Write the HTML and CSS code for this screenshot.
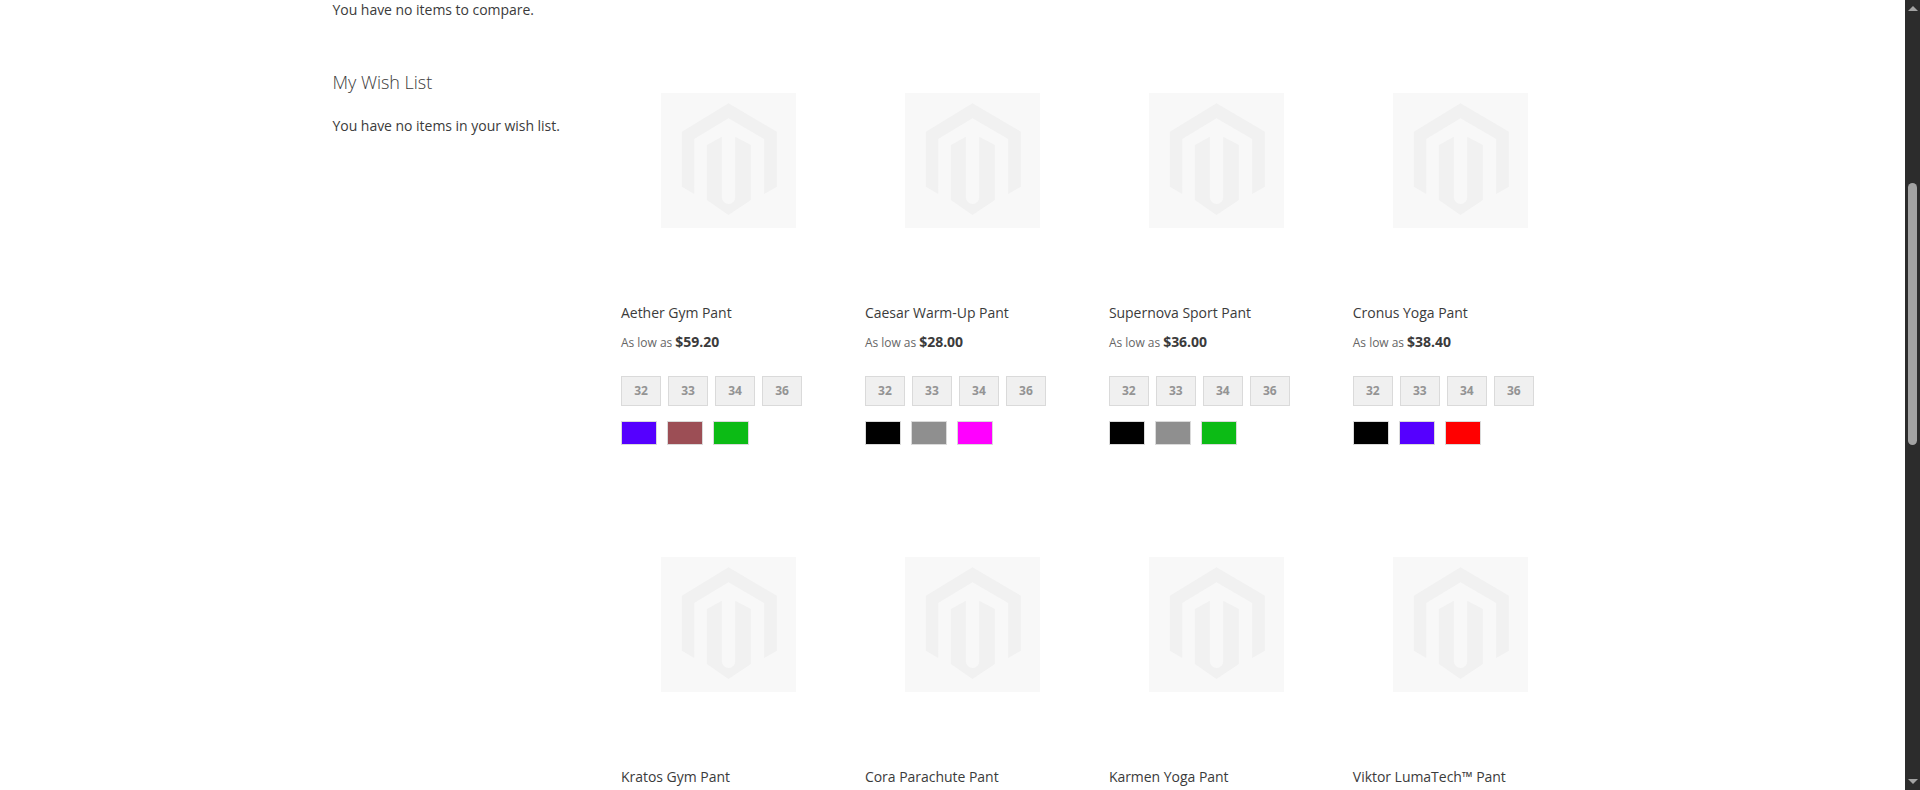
FILE: index.html
```html
<!DOCTYPE html>
<html lang="en">
<head>
    <meta charset="UTF-8">
    <title>Pants</title>
    <link rel="stylesheet" href="styles.css">
</head>
<body>
<svg class="defs" width="0" height="0" aria-hidden="true">
    <symbol id="placeholder" viewBox="0 0 135 135">
        <path fill="#f1f1f1" d="M67.5 10.3 115.9 38.7V93.7L103.2 101V46L67.5 25.3 33.2 46V101L20.9 93.7V38.7Z"/>
        <path fill="#f1f1f1" d="M45.9 52 60.9 43.7V104.4a6.65 6.65 0 0 0 13.3 0V43.7L89.9 52V107L67.5 122 45.9 107Z"/>
    </symbol>
</svg>
<div class="page">
    <main class="main">
        <aside class="sidebar">
            <p class="compare">You have no items to compare.</p>
            <h2 class="wish-title">My Wish List</h2>
            <p class="wish-empty">You have no items in your wish list.</p>
        </aside>
        <div class="products">
            <div class="product">
                <div class="photo"><svg><use href="#placeholder"/></svg></div>
                <a class="name">Aether Gym Pant</a>
                <div class="price">As low as <b>$59.20</b></div>
                <div class="sizes"><span>32</span><span>33</span><span>34</span><span>36</span></div>
                <div class="colors"><i class="purple"></i><i class="brown"></i><i class="green"></i></div>
            </div>
            <div class="product">
                <div class="photo"><svg><use href="#placeholder"/></svg></div>
                <a class="name">Caesar Warm-Up Pant</a>
                <div class="price">As low as <b>$28.00</b></div>
                <div class="sizes"><span>32</span><span>33</span><span>34</span><span>36</span></div>
                <div class="colors"><i class="black"></i><i class="gray"></i><i class="pink"></i></div>
            </div>
            <div class="product">
                <div class="photo"><svg><use href="#placeholder"/></svg></div>
                <a class="name">Supernova Sport Pant</a>
                <div class="price">As low as <b>$36.00</b></div>
                <div class="sizes"><span>32</span><span>33</span><span>34</span><span>36</span></div>
                <div class="colors"><i class="black"></i><i class="gray"></i><i class="green"></i></div>
            </div>
            <div class="product">
                <div class="photo"><svg><use href="#placeholder"/></svg></div>
                <a class="name">Cronus Yoga Pant</a>
                <div class="price">As low as <b>$38.40</b></div>
                <div class="sizes"><span>32</span><span>33</span><span>34</span><span>36</span></div>
                <div class="colors"><i class="black"></i><i class="purple"></i><i class="red"></i></div>
            </div>
            <div class="product">
                <div class="photo"><svg><use href="#placeholder"/></svg></div>
                <a class="name">Kratos Gym Pant</a>
            </div>
            <div class="product">
                <div class="photo"><svg><use href="#placeholder"/></svg></div>
                <a class="name">Cora Parachute Pant</a>
            </div>
            <div class="product">
                <div class="photo"><svg><use href="#placeholder"/></svg></div>
                <a class="name">Karmen Yoga Pant</a>
            </div>
            <div class="product">
                <div class="photo"><svg><use href="#placeholder"/></svg></div>
                <a class="name">Viktor LumaTech™ Pant</a>
            </div>
        </div>
    </main>
    <div class="scrollbar">
        <div class="arrow-up"></div>
        <div class="thumb"></div>
        <div class="arrow-down"></div>
    </div>
</div>
</body>
</html>
```

FILE: styles.css
```css
html, body {
  margin: 0;
  height: 790px;
  overflow: hidden;
  background: #fff;
}
body {
  font-family: "Open Sans", "Liberation Sans", sans-serif;
  font-size: 14px;
  letter-spacing: -0.03px;
  color: #3b3b3b;
}
.defs { position: absolute; }

.page {
  display: flex;
  height: 790px;
  overflow: hidden;
}
.main {
  flex: 1;
  display: flex;
  padding-left: 332.5px;
  align-items: flex-start;
}

.sidebar { width: 288.5px; }
.sidebar p { margin: 0; }
.compare { line-height: 20px; }
.wish-title {
  margin: 50px 0 0;
  font-size: 18px;
  font-weight: 300;
  line-height: 24px;
}
.wish-empty {
  line-height: 20px;
  padding-top: 22px;
}

.products {
  display: grid;
  grid-template-columns: repeat(4, 215.95px);
  column-gap: 28px;
  row-gap: 112px;
  padding-top: 93px;
}
.product { height: 352px; }
.photo {
  display: flex;
  justify-content: center;
  margin-bottom: 75px;
}
.photo svg {
  width: 135px;
  height: 135px;
  background: #f8f8f8;
}
.name {
  display: block;
  line-height: 20px;
  white-space: nowrap;
}
.price {
  margin-top: 9px;
  font-size: 12px;
  line-height: 20px;
  color: #666;
}
.price b {
  font-size: 14px;
  color: #3b3b3b;
}

.sizes {
  display: flex;
  gap: 7px;
  margin-top: 23px;
}
.sizes span {
  box-sizing: border-box;
  width: 40px;
  height: 30px;
  border: 1px solid #dadada;
  background: #f0f0f0;
  color: #949494;
  font-size: 12px;
  font-weight: 700;
  line-height: 28px;
  text-align: center;
}
.colors {
  display: flex;
  gap: 10px;
  margin-top: 15px;
}
.colors i {
  box-sizing: border-box;
  width: 36px;
  height: 24px;
  border: 1px solid #dadada;
}
.purple { background: #5500ff; }
.brown { background: #9c4e55; }
.green { background: #0cbb15; }
.black { background: #000; }
.gray { background: #8f8f8f; }
.pink { background: #ff00ff; }
.red { background: #ff0000; }

.scrollbar {
  width: 15px;
  height: 790px;
  background: #2c2c2c;
  display: flex;
  flex-direction: column;
  align-items: center;
}
.arrow-up, .arrow-down {
  width: 0;
  height: 0;
  border-left: 5px solid transparent;
  border-right: 5px solid transparent;
}
.arrow-up {
  margin-top: 6px;
  border-bottom: 5px solid #a3a3a3;
}
.arrow-down {
  margin-top: auto;
  margin-bottom: 6px;
  border-top: 5px solid #a3a3a3;
}
.thumb {
  width: 9px;
  height: 262px;
  margin-top: 172px;
  background: #a3a3a3;
  border-radius: 5px;
}
```
